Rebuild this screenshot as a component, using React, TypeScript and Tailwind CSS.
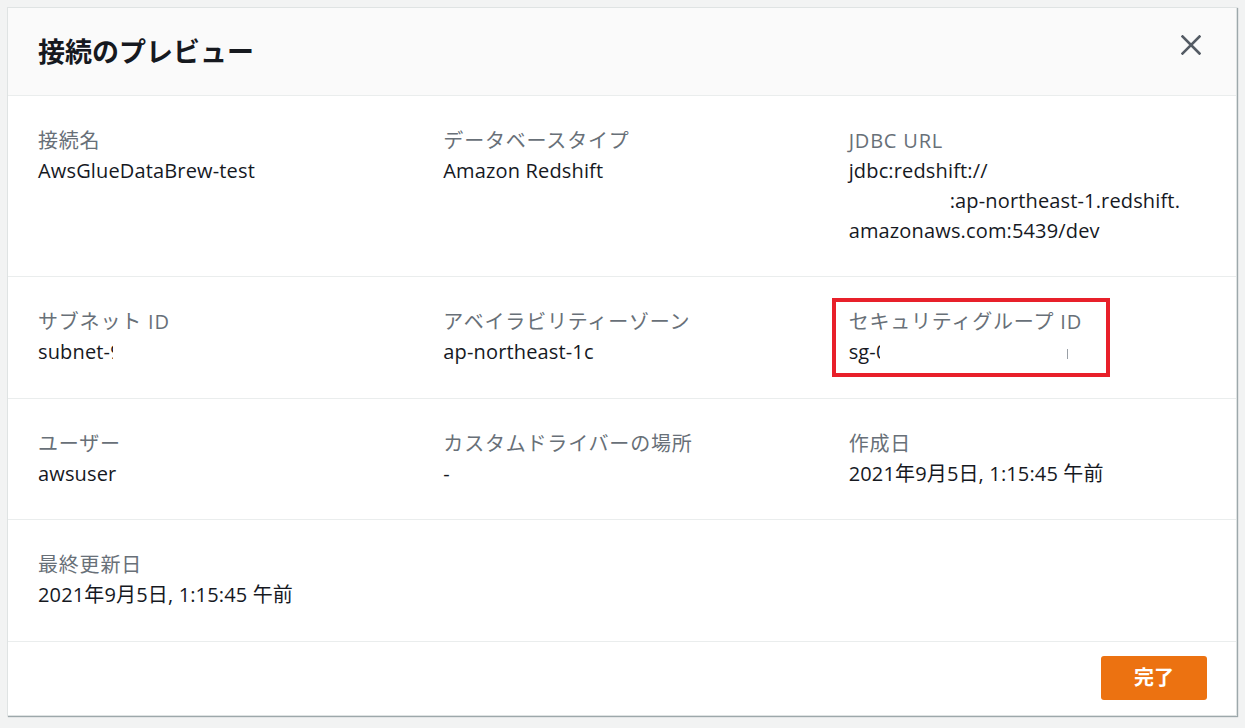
const font = "font-['Open_Sans','Noto_Sans_CJK_JP',sans-serif]";

function Clip({ ch, w }: { ch: string; w: string }) {
  return <span className={`inline-block overflow-hidden align-top ${w}`}>{ch}</span>;
}

function Field({ label, children }: { label: string; children: React.ReactNode }) {
  return (
    <div className="flex flex-col">
      <div className="text-[#687078] tracking-[0.8px]">{label}</div>
      <div className="text-[#16191f] tracking-[0.15px]">{children}</div>
    </div>
  );
}

function Row({ children, tall }: { children: React.ReactNode; tall?: boolean }) {
  return (
    <div
      className={`grid grid-cols-3 gap-x-[48px] px-[30px] pt-[30px] border-b border-[#eaeded] ${tall ? "pb-[31px]" : "pb-[30px]"}`}
    >
      {children}
    </div>
  );
}

export default function App() {
  return (
    <div className={`min-h-[728px] bg-[#f2f3f3] pt-[7px] pl-[7px] ${font} text-[20px] leading-[30px]`}>
      <div className="w-[1230px] h-[709px] flex flex-col bg-white border border-[#dfe3e3] shadow-[1px_1px_1px_0_rgba(0,28,36,0.35)]">
        <header className="h-[88px] shrink-0 flex items-start justify-between pl-[30px] pr-[35px] bg-[#fafafa] border-b border-[#eaeded]">
          <h2 className="mt-[29px] text-[27px] font-bold text-[#16191f] leading-[30px]">接続のプレビュー</h2>
          <svg className="mt-[27px] w-[20px] h-[20px]" viewBox="0 0 20 20" fill="none">
            <path d="M1.5 1.5 L18.5 18.5 M18.5 1.5 L1.5 18.5" stroke="#545b64" strokeWidth="2.6" strokeLinecap="square" />
          </svg>
        </header>

        <Row>
          <Field label="接続名">AwsGlueDataBrew-test</Field>
          <Field label="データベースタイプ">Amazon Redshift</Field>
          <Field label="JDBC URL">
            <div>jdbc:redshift://</div>
            <div className="pl-[101px]">:ap-northeast-1.redshift.</div>
            <div>amazonaws.com:5439/dev</div>
          </Field>
        </Row>

        <Row tall>
          <Field label="サブネット ID">
            subnet-<Clip ch="9" w="w-[3px]" />
          </Field>
          <Field label="アベイラビリティーゾーン">ap-northeast-1c</Field>
          <div className="relative">
            <Field label="セキュリティグループ ID">
              sg-<Clip ch="0" w="w-[4px]" />
              <span className="inline-block w-[187px]" />
              <span className="inline-block w-[1px] h-[10px] bg-[#9aa0a6] align-middle" />
            </Field>
            <div className="absolute left-[-17px] top-[-9px] w-[278px] h-[79px] border-[4px] border-[#e8202a]" />
          </div>
        </Row>

        <Row>
          <Field label="ユーザー">awsuser</Field>
          <Field label="カスタムドライバーの場所">-</Field>
          <Field label="作成日">2021年9月5日, 1:15:45 午前</Field>
        </Row>

        <Row tall>
          <Field label="最終更新日">2021年9月5日, 1:15:45 午前</Field>
        </Row>

        <footer className="flex-1 flex items-start justify-end pt-[14px] pr-[29px]">
          <button className="w-[106px] h-[44px] rounded-[3px] bg-[#ec7211] text-white font-bold text-[20px]">
            完了
          </button>
        </footer>
      </div>
    </div>
  );
}
